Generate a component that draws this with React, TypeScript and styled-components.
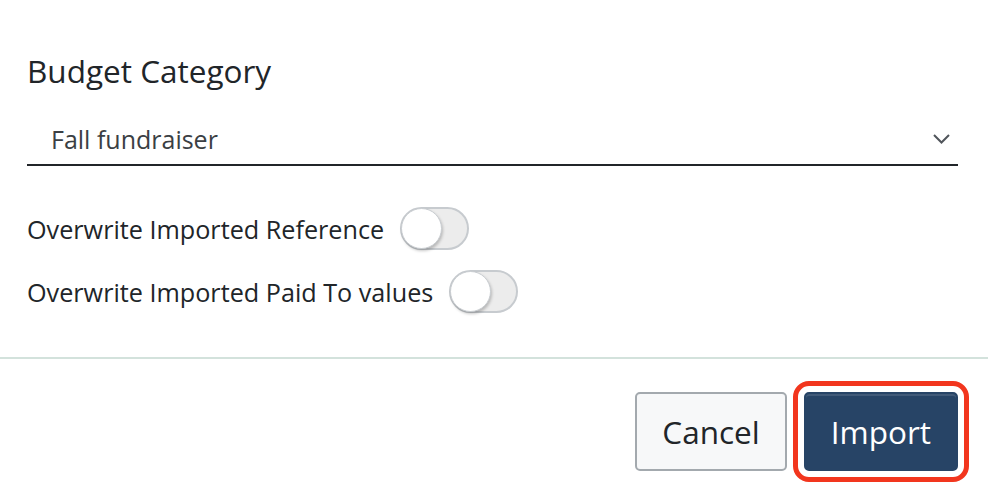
import React, { useState } from 'react'
import styled, { createGlobalStyle } from 'styled-components'

const GlobalStyle = createGlobalStyle`
  html, body {
    margin: 0;
    padding: 0;
    background: #fff;
  }
  body {
    font-family: 'Open Sans', 'Noto Sans', Arial, sans-serif;
    color: #212529;
  }
`

const Dialog = styled.div`
  width: 988px;
  height: 500px;
  display: flex;
  flex-direction: column;
  overflow: hidden;
`

const Body = styled.div`
  padding: 50px 30px 0 27px;
  display: flex;
  flex-direction: column;
`

const Title = styled.h2`
  margin: 0;
  font-size: 31.5px;
  font-weight: 400;
  line-height: 42px;
  color: #212529;
`

const Select = styled.div`
  margin-top: 22px;
  height: 52px;
  display: flex;
  align-items: center;
  justify-content: space-between;
  padding: 0 8px 0 24px;
  border-bottom: 2px solid #212529;
  box-sizing: border-box;
  font-size: 25px;
  color: #3b3f44;
  cursor: pointer;
`

const Options = styled.div`
  display: flex;
  flex-direction: column;
  gap: 20px;
  margin-top: 41px;
`

const OptionRow = styled.label`
  display: flex;
  align-items: center;
  gap: 16px;
  font-size: 25.2px;
  color: #212529;
  cursor: pointer;
`

const Track = styled.span<{ on: boolean }>`
  position: relative;
  width: 69px;
  height: 43px;
  box-sizing: border-box;
  border-radius: 22px;
  border: 2px solid #c7cbcf;
  background: ${({ on }) => (on ? '#274466' : '#ececec')};
  flex-shrink: 0;
`

const Knob = styled.span<{ on: boolean }>`
  position: absolute;
  top: -1px;
  left: ${({ on }) => (on ? '27px' : '-1px')};
  width: 41px;
  height: 41px;
  border-radius: 50%;
  background: #fff;
  border: 1px solid #c9cdd1;
  box-sizing: border-box;
  box-shadow: 1px 2px 3px rgba(0, 0, 0, 0.22);
`

const Divider = styled.hr`
  margin: 44px 0 0;
  border: 0;
  height: 2px;
  background: #d3e2dc;
`

const Footer = styled.div`
  display: flex;
  justify-content: flex-end;
  align-items: center;
  gap: 17px;
  padding: 33px 30px 0 0;
`

const Button = styled.button<{ primary?: boolean }>`
  height: 79px;
  padding: 0 25px;
  font-family: inherit;
  font-size: 31.5px;
  border-radius: 5px;
  cursor: pointer;
  border: 2px solid ${({ primary }) => (primary ? '#274466' : '#a3a9ae')};
  background: ${({ primary }) => (primary ? '#274466' : '#f7f8f9')};
  color: ${({ primary }) => (primary ? '#fff' : '#212529')};
  box-shadow: ${({ primary }) =>
    primary ? 'inset 0 2px 0 rgba(255,255,255,0.12)' : 'none'};
  outline: ${({ primary }) => (primary ? '5px solid #f2361e' : 'none')};
  outline-offset: 6px;
`

function Chevron() {
  return (
    <svg width="17" height="10" viewBox="0 0 17 10" fill="none">
      <path d="M1 1l7.5 7.5L16 1" stroke="#50555b" strokeWidth="2" />
    </svg>
  )
}

function Toggle({ on }: { on: boolean }) {
  return (
    <Track on={on}>
      <Knob on={on} />
    </Track>
  )
}

export default function App() {
  const [reference, setReference] = useState(false)
  const [paidTo, setPaidTo] = useState(false)

  return (
    <Dialog>
      <GlobalStyle />
      <Body>
        <Title>Budget Category</Title>
        <Select>
          <span>Fall fundraiser</span>
          <Chevron />
        </Select>
        <Options>
          <OptionRow onClick={() => setReference(!reference)}>
            Overwrite Imported Reference
            <Toggle on={reference} />
          </OptionRow>
          <OptionRow onClick={() => setPaidTo(!paidTo)}>
            Overwrite Imported Paid To values
            <Toggle on={paidTo} />
          </OptionRow>
        </Options>
      </Body>
      <Divider />
      <Footer>
        <Button>Cancel</Button>
        <Button primary>Import</Button>
      </Footer>
    </Dialog>
  )
}
